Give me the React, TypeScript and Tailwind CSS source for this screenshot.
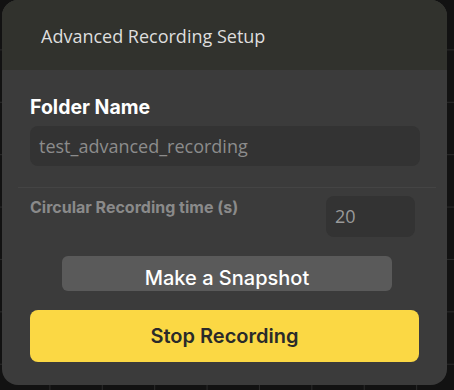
export default function App() {
    return (
        <div className="h-[390px] w-[454px] overflow-hidden bg-[#121212] bg-[linear-gradient(#2a2a2a_1px,transparent_1px),linear-gradient(90deg,#2a2a2a_1px,transparent_1px)] bg-[size:52.4px_52.4px] bg-[position:-3px_-3px]">
            <div className="ml-[2px] flex h-[385px] w-[445px] flex-col overflow-hidden rounded-2xl bg-[#3b3b3b]">
                {/* Header */}
                <div className="flex h-[70px] shrink-0 items-center bg-[#31322d] pl-[39px] pt-[2px]">
                    <h2 className="text-[18px] text-[#dedede]" style={{ fontFamily: '"Open Sans", sans-serif' }}>
                        Advanced Recording Setup
                    </h2>
                </div>

                {/* Body */}
                <div className="flex flex-col px-[28px]" style={{ fontFamily: 'Inter, sans-serif' }}>
                    <label className="mt-[24px] text-[19.5px] font-bold leading-[26px] text-white">Folder Name</label>
                    <div className="mt-[6px] flex h-[40px] w-[390px] items-center rounded-lg bg-[#333333] px-[9px]">
                        <span className="text-[18px] text-[#8c8c8c]" style={{ fontFamily: '"Open Sans", sans-serif' }}>
                            test_advanced_recording
                        </span>
                    </div>

                    <div className="mt-[21px] h-px w-[418px] -ml-[12px] bg-[#444444]" />

                    <div className="mt-[8px] flex items-start justify-between pr-[4px]">
                        <span className="-mt-[1px] text-[16px] font-bold leading-[24px] text-[#8a8a8a]">Circular Recording time (s)</span>
                        <div className="flex h-[41px] w-[89px] items-center rounded-lg bg-[#333333] px-[9px]">
                            <span className="text-[18px] text-[#9a9a9a]" style={{ fontFamily: '"Open Sans", sans-serif' }}>20</span>
                        </div>
                    </div>

                    <button className="mt-[19px] ml-[32px] flex h-[35px] w-[330px] items-center justify-center rounded-md bg-[#5a5a5a] pt-[8px] text-[20px] font-medium leading-[24px] text-white">
                        Make a Snapshot
                    </button>

                    <button className="mt-[19px] flex h-[52px] w-[389px] items-center justify-center rounded-lg bg-[#fbd844] text-[20px] font-semibold text-[#2a2a2a]">
                        Stop Recording
                    </button>
                </div>
            </div>
        </div>
    );
}
